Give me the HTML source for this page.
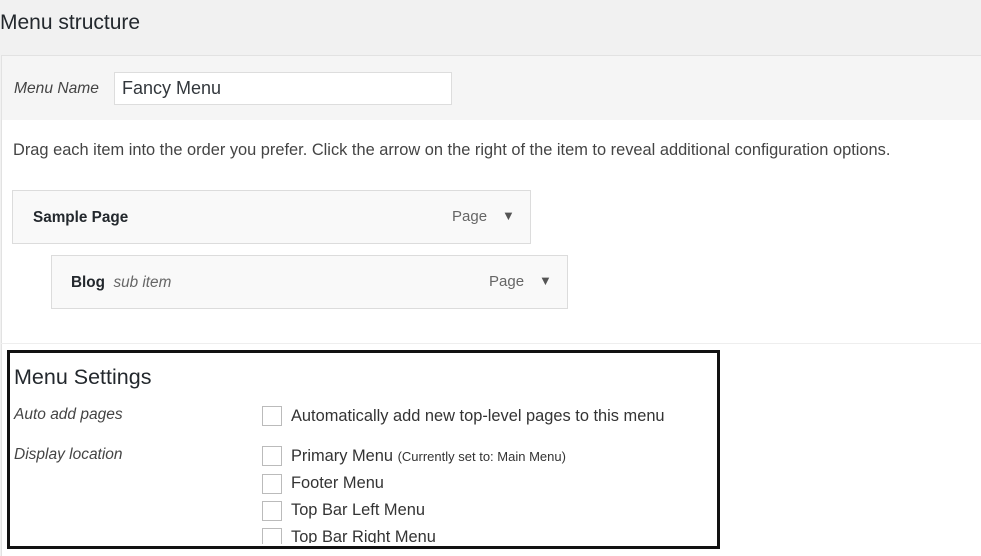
<!DOCTYPE html>
<html><head><style>
body{margin:0;width:981px;height:556px;overflow:hidden;background:#f1f1f1;font-family:"Liberation Sans",sans-serif;color:#23282d;position:relative}
.a{position:absolute;white-space:nowrap}
</style></head><body>
<div class="a" style="left:0;top:11px;font-size:21px;">Menu structure</div>
<div class="a" style="left:1px;top:55px;width:990px;height:64px;background:#f5f5f5;border-top:1px solid #e2e2e2;border-left:1px solid #e2e2e2;border-bottom:1px solid #dcdcdc"></div>
<div class="a" style="left:14px;top:80px;font-size:15.6px;font-style:italic;color:#444">Menu Name</div>
<div class="a" style="left:114px;top:72px;width:336px;height:31px;background:#fff;border:1px solid #ddd"></div>
<div class="a" style="left:122px;top:78px;font-size:18px;color:#32373c">Fancy Menu</div>
<div class="a" style="left:1px;top:120px;width:990px;height:436px;background:#fff;border-left:1px solid #e2e2e2"></div>
<div class="a" style="left:13px;top:141px;font-size:16.4px;color:#444">Drag each item into the order you prefer. Click the arrow on the right of the item to reveal additional configuration options.</div>
<div class="a" style="left:12px;top:190px;width:517px;height:52px;background:#f9f9f9;border:1px solid #dcdcdc"></div>
<div class="a" style="left:33px;top:209px;font-size:15.3px;font-weight:bold">Sample Page</div>
<div class="a" style="left:452px;top:208px;font-size:15px;color:#666">Page</div>
<div class="a" style="left:502px;top:208px;font-size:13px;color:#555">▼</div>
<div class="a" style="left:51px;top:255px;width:515px;height:52px;background:#f9f9f9;border:1px solid #dcdcdc"></div>
<div class="a" style="left:71px;top:274px;font-size:15.3px;"><b>Blog</b> <i style="color:#666">&nbsp;sub item</i></div>
<div class="a" style="left:489px;top:273px;font-size:15px;color:#666">Page</div>
<div class="a" style="left:539px;top:273px;font-size:13px;color:#555">▼</div>
<div class="a" style="left:1px;top:343px;width:990px;height:1px;background:#eee"></div>
<div class="a" style="left:7px;top:350px;width:707px;height:193px;border:3px solid #111"></div>
<div class="a" style="left:14px;top:365px;font-size:21.5px;">Menu Settings</div>
<div class="a" style="left:14px;top:406px;font-size:15.5px;font-style:italic;color:#444">Auto add pages</div>
<div class="a" style="left:14px;top:446px;font-size:15.5px;font-style:italic;color:#444">Display location</div>
<div class="a" style="left:262px;top:406px;width:18px;height:18px;border:1px solid #bbb;background:#fff"></div>
<div class="a" style="left:291px;top:407px;font-size:16.4px;color:#333">Automatically add new top-level pages to this menu</div>
<div class="a" style="left:262px;top:446px;width:18px;height:18px;border:1px solid #bbb;background:#fff"></div>
<div class="a" style="left:291px;top:447px;font-size:16.4px;color:#333">Primary Menu <span style="font-size:13px">(Currently set to: Main Menu)</span></div>
<div class="a" style="left:262px;top:474px;width:18px;height:18px;border:1px solid #bbb;background:#fff"></div>
<div class="a" style="left:291px;top:474px;font-size:16.4px;color:#333">Footer Menu</div>
<div class="a" style="left:262px;top:501px;width:18px;height:18px;border:1px solid #bbb;background:#fff"></div>
<div class="a" style="left:291px;top:501px;font-size:16.4px;color:#333">Top Bar Left Menu</div>
<div class="a" style="left:262px;top:528px;width:18px;height:15px;border:1px solid #bbb;border-bottom:none;background:#fff"></div>
<div class="a" style="left:291px;top:528px;font-size:16.4px;color:#333;height:15px;overflow:hidden">Top Bar Right Menu</div>
</body></html>
